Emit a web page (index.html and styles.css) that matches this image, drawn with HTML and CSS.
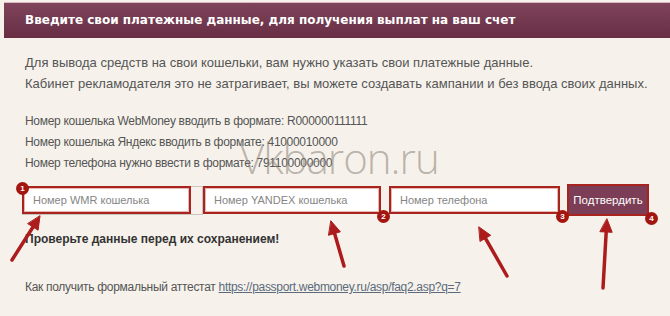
FILE: index.html
```html
<!DOCTYPE html>
<html lang="ru">
<head>
    <meta charset="UTF-8">
    <meta name="viewport" content="width=device-width, initial-scale=1.0">
    <title>Платежные данные</title>
    <link rel="stylesheet" href="styles.css">
</head>
<body>
    <div class="page">
        <div class="panel-head">Введите свои платежные данные, для получения выплат на ваш счет</div>

        <div class="panel-body">
            <p class="intro">
                Для вывода средств на свои кошельки, вам нужно указать свои платежные данные.<br>
                Кабинет рекламодателя это не затрагивает, вы можете создавать кампании и без ввода своих данных.
            </p>

            <p class="formats">
                Номер кошелька WebMoney вводить в формате: R000000111111<br>
                Номер кошелька Яндекс вводить в формате: 41000010000<br>
                Номер телефона нужно ввести в формате: 791100000000
            </p>

            <form class="wallet-form" action="#" method="post">
                <div class="field field-wmr">
                    <input type="text" name="wmr" placeholder="Номер WMR кошелька">
                    <span class="badge badge-tl">1</span>
                </div>
                <div class="field field-yandex">
                    <input type="text" name="yandex" placeholder="Номер YANDEX кошелька">
                    <span class="badge badge-br">2</span>
                </div>
                <div class="field field-phone">
                    <input type="text" name="phone" placeholder="Номер телефона">
                    <span class="badge badge-br">3</span>
                </div>
                <div class="field field-submit">
                    <button type="submit">Подтвердить</button>
                    <span class="badge badge-br">4</span>
                </div>
            </form>

            <p class="warn">Проверьте данные перед их сохранением!</p>

            <p class="attest">Как получить формальный аттестат <a href="#">https://passport.webmoney.ru/asp/faq2.asp?q=7</a></p>
        </div>

        <!-- водяной знак -->
        <div class="watermark">Vkbaron.ru</div>

        <!-- стрелки-подсказки -->
        <svg class="arrows" width="670" height="316" viewBox="0 0 670 316">
            <g stroke="#ac1c1c" stroke-linecap="round" fill="#ac1c1c">
                <line x1="12" y1="260" x2="33" y2="227" stroke-width="3.5"/>
                <polygon points="40,216 38.1,230.2 27.9,223.8" stroke-width="1"/>
                <line x1="344" y1="266" x2="334.6" y2="233.5" stroke-width="3.5"/>
                <polygon points="331,221 340.4,231.8 328.8,235.2" stroke-width="1"/>
                <line x1="507" y1="276" x2="485.5" y2="238.3" stroke-width="3.5"/>
                <polygon points="479,227 490.7,235.3 480.3,241.3" stroke-width="1"/>
                <line x1="603" y1="288" x2="606.2" y2="232" stroke-width="3.5"/>
                <polygon points="607,219 612.2,232.3 600.2,231.7" stroke-width="1"/>
            </g>
        </svg>
    </div>
</body>
</html>
```

FILE: styles.css
```css
body {
    margin: 0;
    background: #f6f2eb;
    font-family: "Liberation Sans", Arial, sans-serif;
}

.page {
    position: relative;
    height: 316px;
    overflow: hidden;
}

.panel-head {
    margin: 2px 0 0 4px;
    height: 35px;
    line-height: 35px;
    padding-left: 21px;
    border-top: 1px solid #dcb6c2;
    background: linear-gradient(#7f445b, #672e44);
    color: #ffffff;
    font-family: "DejaVu Sans", sans-serif;
    font-weight: bold;
    font-size: 12px;
}

.panel-body {
    padding: 14px 0 0 25px;
    color: #555555;
    font-size: 13px;
    line-height: 21px;
}

.panel-body p {
    margin: 0;
}

.panel-body .formats {
    margin-top: 17px;
    font-size: 12px;
    letter-spacing: -0.3px;
}

/* поля ввода */
.wallet-form {
    display: flex;
    align-items: center;
    margin: 10px 0 0 -3px;
    height: 32px;
}

.field {
    position: relative;
}

.field input {
    box-sizing: border-box;
    display: block;
    height: 28px;
    padding: 0 9px;
    border: 2px solid #a8241f;
    box-shadow: inset 0 0 0 1px #e8b7b1;
    background: #ffffff;
    font-family: "Liberation Sans", Arial, sans-serif;
    font-size: 11px;
    color: #555555;
    outline: none;
}

.field input::placeholder {
    color: #858585;
}

.field-wmr {
    margin-right: 12px;
}
.field-wmr input {
    position: relative;
    width: 169px;
}
/* рамка исходного поля, выступающая из-под выделения */
.field-wmr::before {
    content: "";
    position: absolute;
    left: 0;
    top: 0;
    width: 179px;
    height: 27px;
    border: 1px solid #c9c4bd;
}

.field-yandex {
    margin-right: 8px;
}
.field-yandex input {
    width: 178px;
}

.field-phone {
    margin-right: 7px;
}
.field-phone input {
    width: 171px;
}

.field-submit button {
    display: block;
    box-sizing: border-box;
    width: 82px;
    height: 32px;
    padding: 0;
    border: 2px solid #a8241f;
    background: #7b3e56;
    color: #ffffff;
    font-family: "Liberation Sans", Arial, sans-serif;
    font-size: 11.5px;
    cursor: pointer;
}

.badge {
    position: absolute;
    z-index: 2;
    width: 13px;
    height: 13px;
    border-radius: 50%;
    background: #a3150f;
    color: #ffffff;
    font-size: 8px;
    font-weight: bold;
    line-height: 13px;
    text-align: center;
}

.badge-tl {
    left: -6px;
    top: -4px;
}

.badge-br {
    right: -9px;
    bottom: -9px;
}

.panel-body .warn {
    margin-top: 13px;
    font-size: 12px;
    font-weight: bold;
    color: #333333;
}

.panel-body .attest {
    margin-top: 27px;
    font-size: 12px;
    letter-spacing: -0.3px;
}

.attest a {
    color: #5b6b7b;
}

.watermark {
    position: absolute;
    left: 240px;
    top: 129px;
    font-family: "Open Sans", sans-serif;
    font-weight: 300;
    font-size: 42px;
    letter-spacing: -1px;
    color: rgba(135, 127, 117, 0.55);
    pointer-events: none;
}

.arrows {
    position: absolute;
    left: 0;
    top: 0;
    pointer-events: none;
}
```
